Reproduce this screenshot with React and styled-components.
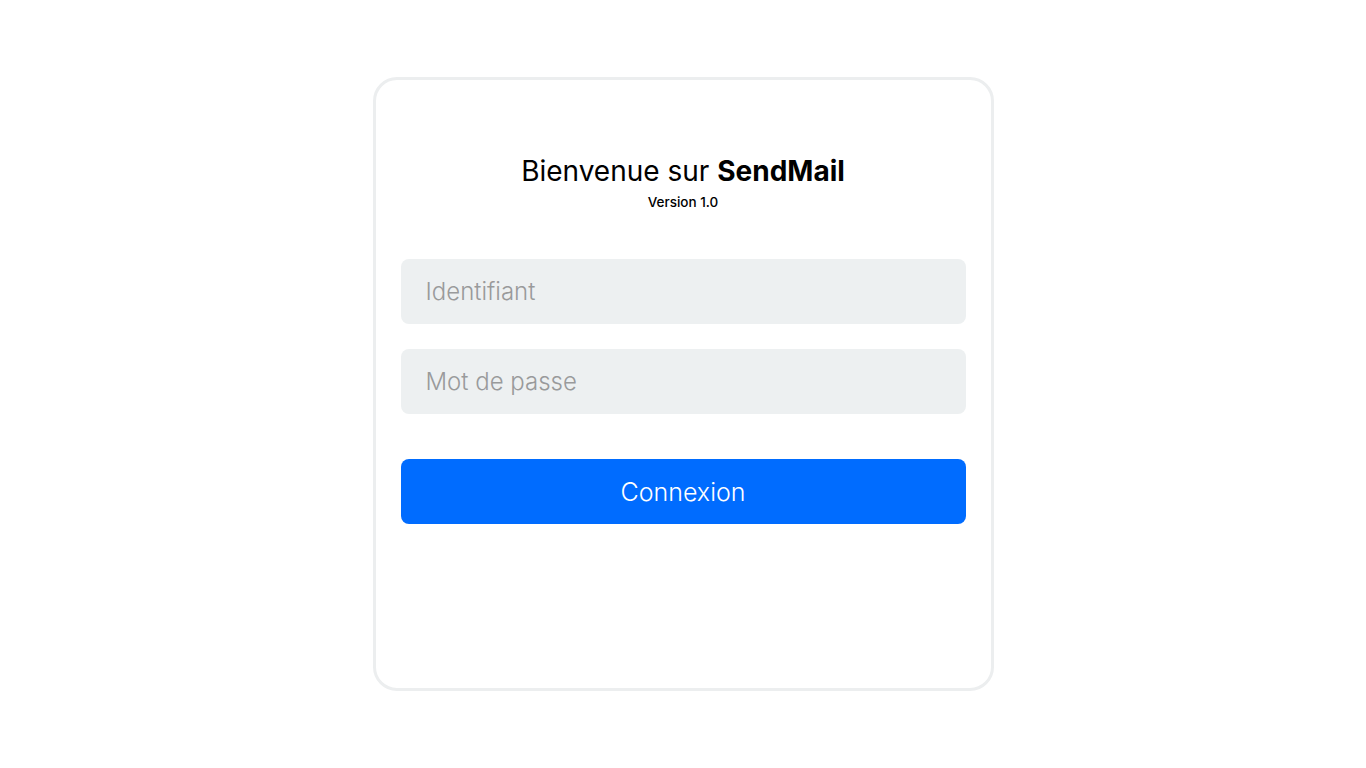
import React, { useState } from 'react';
import styled, { createGlobalStyle } from 'styled-components';

const GlobalStyle = createGlobalStyle`
  html, body {
    margin: 0;
    padding: 0;
    background: #ffffff;
    font-family: 'Inter', 'Noto Sans', sans-serif;
  }
`;

const Page = styled.div`
  height: 768px;
  display: flex;
  align-items: center;
  justify-content: center;
`;

const Card = styled.form`
  box-sizing: border-box;
  width: 621px;
  height: 614px;
  border: 3px solid #eceeef;
  border-radius: 24px;
  background: #fff;
  padding: 74px 25px 0;
  display: flex;
  flex-direction: column;
`;

const Header = styled.div`
  text-align: center;
  margin-bottom: 49px;
`;

const Title = styled.h1`
  margin: 0;
  font-size: 28px;
  font-weight: 400;
  color: #000;
  line-height: 34px;
  b {
    font-weight: 700;
  }
`;

const Version = styled.div`
  margin-top: 6px;
  font-size: 13.5px;
  font-weight: 500;
  color: #000;
  line-height: 16px;
`;

const Field = styled.input`
  box-sizing: border-box;
  width: 100%;
  height: 65px;
  border: none;
  outline: none;
  border-radius: 8px;
  background: #edf0f1;
  padding: 0 25px;
  font-family: inherit;
  font-size: 24px;
  font-weight: 300;
  color: #333;
  margin-bottom: ${(p) => p.$gap || 25}px;
  &::placeholder {
    color: #999a9b;
  }
`;

const Button = styled.button`
  height: 65px;
  width: 100%;
  border: none;
  border-radius: 8px;
  background: #006cff;
  color: #fff;
  font-family: inherit;
  font-size: 25px;
  font-weight: 300;
  cursor: pointer;
`;

const App = () => {
  const [login, setLogin] = useState('');
  const [password, setPassword] = useState('');

  return (
    <Page>
      <GlobalStyle />
      <Card onSubmit={(e) => e.preventDefault()}>
        <Header>
          <Title>
            Bienvenue sur <b>SendMail</b>
          </Title>
          <Version>Version 1.0</Version>
        </Header>
        <Field
          value={login}
          onChange={(e) => setLogin(e.target.value)}
          placeholder="Identifiant"
        />
        <Field
          type="password"
          $gap={45}
          value={password}
          onChange={(e) => setPassword(e.target.value)}
          placeholder="Mot de passe"
        />
        <Button type="submit">Connexion</Button>
      </Card>
    </Page>
  );
};

export default App;
